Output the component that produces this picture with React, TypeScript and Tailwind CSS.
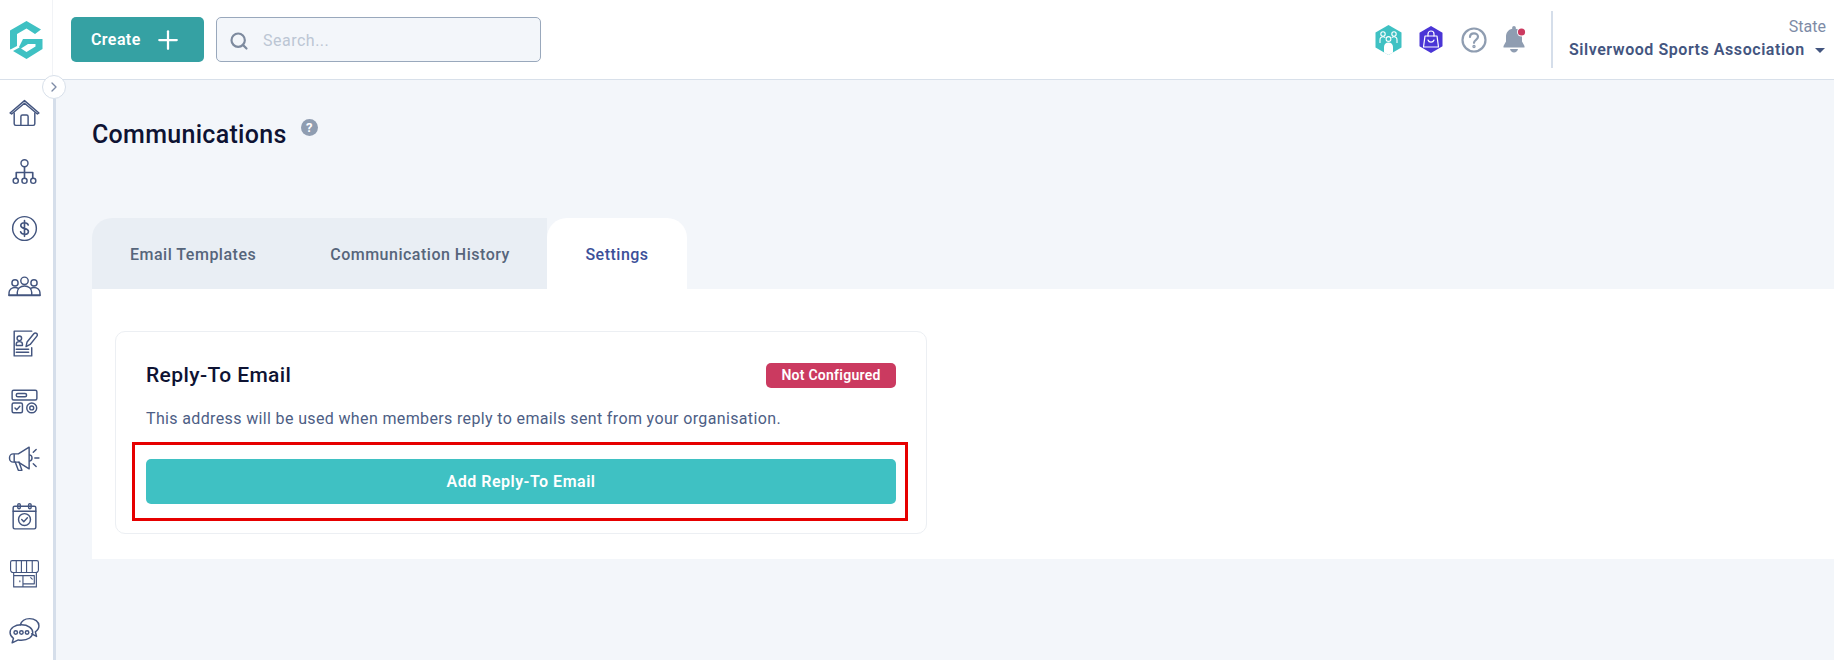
import { ChevronRight, Plus, Search } from 'lucide-react'

const navStroke = '#43557f'

function Logo() {
  return (
    <svg width="33" height="38" viewBox="0 0 33 38" fill="#3fc1c3">
      <path d="M16.500 0 31 8.500 25 13 16.500 7.500 7 13v12l-6.500 3.500-.5-.5V9.500z" />
      <path d="M13 18h19.500v10L16.500 38 3 30l6.500-3.500 7 4.500 9-5.500V23h-7.500l-7 4.500-2-1.500z" />
    </svg>
  )
}

function NavIcon({ children }: { children: React.ReactNode }) {
  return (
    <div className="flex h-[57.5px] w-full items-center justify-center">
      <svg
        width="33"
        height="33"
        viewBox="0 0 32 32"
        fill="none"
        stroke={navStroke}
        strokeWidth="1.4"
        strokeLinecap="round"
        strokeLinejoin="round"
      >
        {children}
      </svg>
    </div>
  )
}

function SideNav() {
  return (
    <div className="flex flex-col pt-[5px] pr-[5px]">
      {/* home */}
      <NavIcon>
        <path d="M2 15.500 16 3.500l14 12-1.500 1L16 6 3.500 16.500z" />
        <path d="M6 15.500V26a1.500 1.500 0 0 0 1.500 1.500h17A1.500 1.500 0 0 0 26 26V15.500" />
        <path d="M12.500 27.500V19a1.500 1.500 0 0 1 1.500-1.500h4a1.500 1.500 0 0 1 1.500 1.500v8.500" />
      </NavIcon>
      {/* org chart */}
      <NavIcon>
        <circle cx="16" cy="8" r="3.400" />
        <path d="M16 11.400V17M8 22.500V17h16v5.500M16 17v5.500" strokeWidth="1.600" />
        <circle cx="7.500" cy="25" r="2.500" />
        <circle cx="16" cy="25" r="2.500" />
        <circle cx="24.500" cy="25" r="2.500" />
      </NavIcon>
      {/* dollar */}
      <NavIcon>
        <circle cx="16" cy="16" r="11.500" />
        <path d="M19.600 12.600c-.5-1.500-2-2.200-3.600-2.200-2 0-3.600 1-3.600 2.800 0 4 7.400 1.800 7.400 5.600 0 1.800-1.700 2.800-3.800 2.800-1.800 0-3.300-.8-3.800-2.400M16 8.400v15.200" strokeWidth="1.600" />
      </NavIcon>
      {/* members */}
      <NavIcon>
        <circle cx="16" cy="10.500" r="3.600" />
        <circle cx="6.800" cy="12.500" r="3" />
        <circle cx="25.200" cy="12.500" r="3" />
        <path d="M9 24v-2.500c0-3.500 3-6 7-6s7 2.500 7 6V24" />
        <path d="M1 24v-2c0-2.800 2.500-5 5.800-5 1.200 0 2.200.3 3.200.9M31 24v-2c0-2.800-2.500-5-5.800-5-1.200 0-2.200.3-3.200.9" />
        <path d="M1 24.500h30" strokeWidth="1.800" />
      </NavIcon>
      {/* registration form */}
      <NavIcon>
        <path d="M23 4H6v24h17v-8" />
        <circle cx="11" cy="11" r="2.200" />
        <path d="M8 18v-1.500c0-1.300 1.200-2.300 3-2.300s3 1 3 2.300V18zM8 21.500h12M8 24.500h12" />
        <path d="m17.500 19 1-4.500L25 6.500c.8-.9 1.800-1 2.700-.3.900.7 1 1.800.3 2.700l-6.500 8z" />
      </NavIcon>
      {/* products */}
      <NavIcon>
        <rect x="4" y="5" width="24" height="9.500" rx="1.500" />
        <rect x="8" y="8.200" width="10" height="3.200" rx="1.500" />
        <rect x="4" y="17.500" width="10" height="9.500" rx="1.500" />
        <path d="m6.800 22.200 1.700 1.700 3-3.200" />
        <circle cx="23" cy="22.200" r="4.800" />
        <circle cx="23" cy="22.200" r="1.900" />
      </NavIcon>
      {/* megaphone */}
      <NavIcon>
        <path d="M20.500 5 10 11.500H5a3.500 3.500 0 0 0-3.500 3.500v1A3.500 3.500 0 0 0 5 19.500h5L20.500 26z" />
        <path d="M6 12v7M7 19.500 10 27.500h3.500l-2.800-8" />
        <path d="M21 12.500c1.500.4 2.300 1.700 2.300 3s-.8 2.600-2.300 3" />
        <path d="M26 15.500h4M24.500 10l2.800-2.800M24.500 21l2.800 2.800" />
      </NavIcon>
      {/* calendar */}
      <NavIcon>
        <rect x="5" y="6" width="22" height="22" rx="1.500" />
        <path d="M5 11h22" />
        <rect x="9.500" y="3.500" width="2.400" height="5" rx="1.200" />
        <rect x="20" y="3.500" width="2.400" height="5" rx="1.200" />
        <circle cx="16" cy="19" r="5.800" />
        <path d="m13.300 19 2 2 3.500-3.800" />
      </NavIcon>
      {/* shop */}
      <NavIcon>
        <path d="M4 3.500h24c.8 0 1.500.7 1.500 1.500v7.500a2.400 2.400 0 0 1-2.500 2.500H5a2.400 2.400 0 0 1-2.500-2.500V5C2.500 4.200 3.200 3.500 4 3.500z" strokeWidth="1.100" />
        <path d="M8 3.500V15M13 3.500V15M18 3.500V15M23.500 3.500V15" strokeWidth="1.100" />
        <path d="M5.500 15v14h22V15M5.500 29h22M14.500 18v11M5.500 18h9M14.500 18H25.500v8H14.500" strokeWidth="1.100" />
        <path d="M11.500 23v1M22 20l1.500 1.500" strokeWidth="1.100" />
      </NavIcon>
      {/* chat */}
      <NavIcon>
        <path d="M13 9.500c-6.500 0-11 3.200-11 7.500 0 2.300 1.200 4.200 3.300 5.600L4 27l6-2.800c1 .2 2 .3 3 .3 6.500 0 11-3.300 11-7.500s-4.500-7.500-11-7.500z" />
        <path d="M12 9.500C13 6 16.500 3.500 21 3.500c5 0 9 3 9 7 0 2.500-1.400 4.500-3.500 5.800l1.200 4.500-4.700-2.500" />
        <circle cx="7.500" cy="17" r="1.700" />
        <circle cx="13" cy="17" r="1.700" />
        <circle cx="18.500" cy="17" r="1.700" />
      </NavIcon>
    </div>
  )
}

function Header() {
  return (
    <header className="flex h-[80px] shrink-0 items-stretch border-b border-[#d8e0ea] bg-white">
      <div className="flex w-[53px] shrink-0 items-center justify-center border-r border-[#f1f3f6] pl-[1px]">
        <Logo />
      </div>
      <div className="flex flex-1 items-start pl-[18px] pt-[17px]">
        <button className="flex h-[45px] w-[133px] items-center rounded-[5px] bg-[#35a1a3] pl-[20px] text-[16px] font-semibold tracking-[0.4px] text-white">
          Create
          <Plus size={30} strokeWidth={1.8} className="ml-[12px]" />
        </button>
        <div className="ml-[12px] flex h-[45px] w-[325px] items-center rounded-[5px] border border-[#99a8bc] bg-[#f3f6fa] pl-[12px] pt-[3px]">
          <Search size={20} strokeWidth={2.6} className="text-[#7d8a9e]" />
          <span className="ml-[14px] text-[16px] tracking-[0.5px] text-[#bcc6d4]">Search...</span>
        </div>
      </div>
      <div className="flex items-center">
        <svg width="27" height="30" viewBox="0 0 27 30">
          <path d="M13.500 0 26.500 7.500v15L13.500 30 .5 22.500v-15z" fill="#3fc1c3" />
          <g fill="none" stroke="#fff" strokeWidth="1.100">
            <circle cx="8" cy="9" r="2.200" />
            <circle cx="19" cy="9" r="2.200" />
            <path d="M5 18v-3c0-2 1.300-3.200 3-3.200 1 0 1.700.3 2.300.9M22 18v-3c0-2-1.300-3.200-3-3.200-1 0-1.700.3-2.300.9" />
            <circle cx="13.500" cy="14" r="2.400" />
          </g>
          <path d="M9 27.500V22c0-2.500 1.800-4.500 4.500-4.500S18 19.500 18 22v5.500L13.500 30z" fill="#fff" />
        </svg>
        <svg width="24" height="27" viewBox="0 0 24 27" className="ml-[17px]">
          <path d="M12 0 23.500 6.700v13.600L12 27 .5 20.300V6.700z" fill="#4a35d6" />
          <g fill="none" stroke="#fff" strokeWidth="1.200" strokeLinecap="round" strokeLinejoin="round">
            <path d="M6 10h12l1.500 11h-15z" />
            <path d="M9 10V8c0-1.800 1.300-3 3-3s3 1.200 3 3v2" />
            <path d="M9 14c.5 1.500 1.600 2.200 3 2.200s2.500-.7 3-2.200" />
          </g>
        </svg>
        <svg width="26" height="26" viewBox="0 0 26 26" className="ml-[18px]" fill="none" stroke="#8f9db1" strokeWidth="2.200">
          <circle cx="13" cy="13" r="11.500" />
          <path d="M9 10c0-2.300 1.800-3.700 4-3.700s4 1.400 4 3.500c0 3-4 3-4 6" strokeLinecap="round" />
          <circle cx="13" cy="19.500" r=".6" fill="#8f9db1" />
        </svg>
        <svg width="24" height="27" viewBox="0 0 24 27" className="ml-[16px] mr-[24px]">
          <path d="M11 0c1 0 1.800.8 1.800 1.800v1C17 3.700 19 7 19 11v4.500l2.500 4.500v1.500H.5V20L3 15.500V11c0-4 2-7.300 6.200-8.200v-1C9.200.8 10 0 11 0z" fill="#8f9db1" />
          <path d="M7 23h8c-.5 2-2 3.500-4 3.500S7.500 25 7 23z" fill="#8f9db1" />
          <circle cx="18.500" cy="6" r="4.500" fill="#fff" />
          <circle cx="18.500" cy="6" r="3.600" fill="#cb3a60" />
        </svg>
        <div className="h-[57px] w-[2px] bg-[#d5deea]" />
        <div className="flex w-[281px] flex-col pb-[2px] pl-[16px] pr-[8px]">
          <span className="text-right text-[16px] leading-[20px] text-[#7d8ba6]">State</span>
          <div className="mt-[2px] flex items-center justify-between">
            <span className="text-[16px] font-semibold leading-[22px] tracking-[0.55px] text-[#43557f]">Silverwood Sports Association</span>
            <span className="mr-[1px] mt-[2px] h-0 w-0 border-x-[5px] border-t-[5px] border-x-transparent border-t-[#43557f]" />
          </div>
        </div>
      </div>
    </header>
  )
}

function SettingsCard() {
  return (
    <div className="ml-[23px] mt-[41px] w-[812px] rounded-[10px] border border-[#eceff3] bg-white px-[30px] pt-[30px] pb-[29px]">
      <div className="flex h-[27px] items-center justify-between">
        <h2 className="text-[21px] font-medium tracking-[0.4px] text-[#0e1333]">Reply-To Email</h2>
        <span className="flex h-[25px] w-[130px] items-center justify-center rounded-[5px] bg-[#cb3a60] text-[14px] font-semibold tracking-[0.25px] text-white">
          Not Configured
        </span>
      </div>
      <p className="mt-[18px] text-[16px] leading-[24px] tracking-[0.36px] text-[#4d5e85]">
        This address will be used when members reply to emails sent from your organisation.
      </p>
      {/* red box is an annotation sitting over the card */}
      <div className="relative mt-[28px]">
        <div className="pointer-events-none absolute -left-[14px] -right-[12px] -inset-y-[17px] border-[3px] border-[#e60000]" />
        <button className="flex h-[45px] w-full items-center justify-center rounded-[5px] bg-[#3fc1c3] text-[16px] font-semibold tracking-[0.5px] text-white">
          Add Reply-To Email
        </button>
      </div>
    </div>
  )
}

export default function App() {
  return (
    <div className="relative flex h-[660px] w-[1834px] flex-col overflow-hidden bg-[#f3f6fa] font-['Roboto',sans-serif]">
      <Header />
      <div className="flex flex-1">
        <aside className="w-[56px] shrink-0 border-r-[3px] border-[#d5deea] bg-white">
          <SideNav />
        </aside>
        <main className="flex-1 pl-[36px]">
          <div className="flex h-[138px] items-start pt-[37px]">
            <h1 className="text-[25px] font-medium leading-[36px] tracking-[0.3px] text-[#0e1333]">Communications</h1>
            <span className="ml-[14px] mt-[2px] flex h-[17px] w-[17px] items-center justify-center rounded-full bg-[#8f9db1] text-[13px] font-bold text-white">
              ?
            </span>
          </div>
          <div className="flex h-[71px] items-stretch text-[16px] tracking-[0.5px]">
            <div className="flex w-[455px] items-center rounded-tl-[20px] bg-[#e9eef4] pt-[2px] text-[#56657b]">
              <span className="ml-[38px] font-medium">Email Templates</span>
              <span className="ml-[74px] font-medium">Communication History</span>
            </div>
            <div className="flex w-[140px] items-center justify-center rounded-t-[20px] bg-white pt-[2px] font-medium text-[#3c5099]">
              Settings
            </div>
          </div>
          <div className="h-[270px] bg-white pt-[1px]">
            <SettingsCard />
          </div>
        </main>
      </div>
      {/* sidebar collapse toggle, overlaps the header border */}
      <div className="absolute left-[42px] top-[75px] flex h-[24px] w-[24px] items-center justify-center rounded-full border border-[#d8e0ea] bg-white">
        <ChevronRight size={16} className="text-[#7d8ba6]" />
      </div>
    </div>
  )
}
